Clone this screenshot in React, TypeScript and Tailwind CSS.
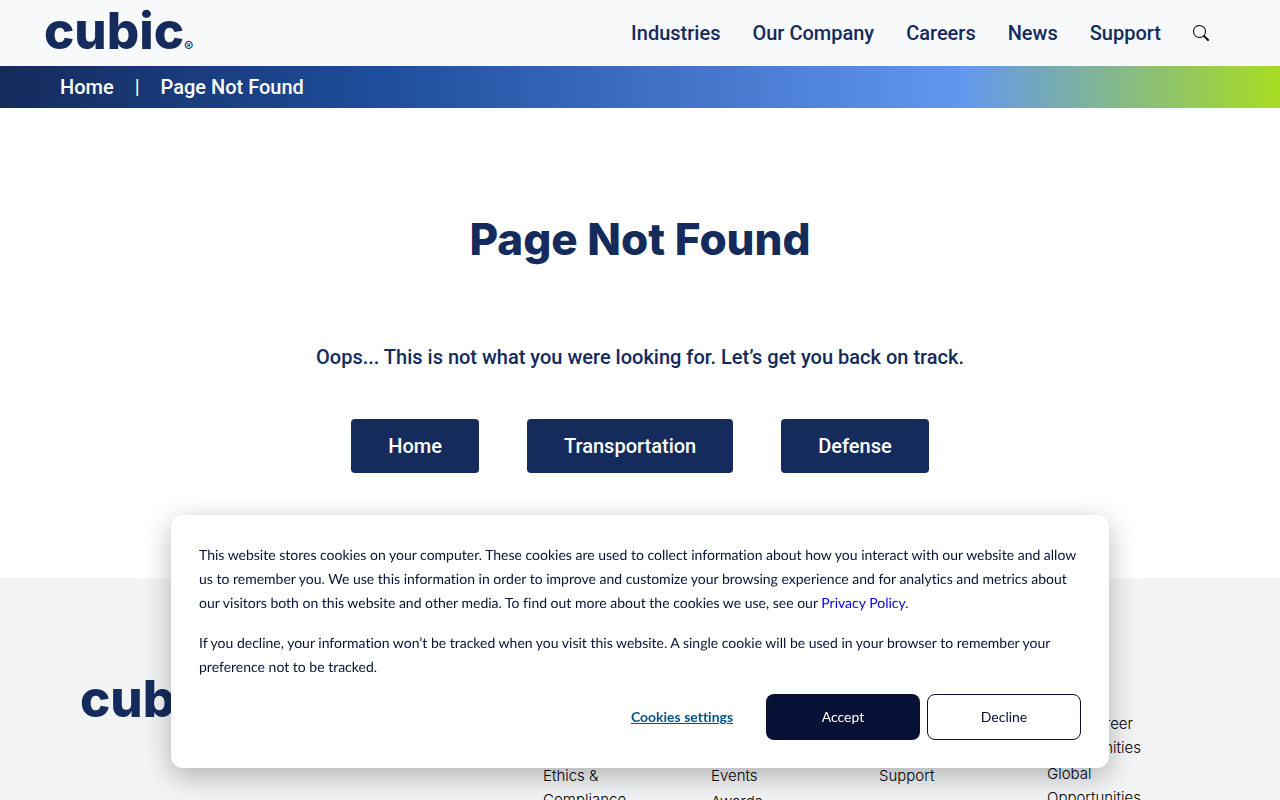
import { FC } from "react";
import { BsSearch } from "react-icons/bs";

const navLinks = ["Industries", "Our Company", "Careers", "News", "Support"];

const buttons = ["Home", "Transportation", "Defense"];

const Logo: FC = () => (
  <a
    href="#"
    className="flex items-end font-['Inter',sans-serif] text-[#142b5c]"
  >
    <span className="text-[51px] leading-[52px] font-extrabold">cubic</span>
    <span className="text-sm leading-5 font-medium">®</span>
  </a>
);

type columnProps = {
  links: string[];
  className?: string;
};

const FooterColumn: FC<columnProps> = ({ links, className = "" }) => (
  <ul className={"flex flex-col gap-[2px] " + className}>
    {links.map((link) => (
      <li key={link}>
        <a href="#">{link}</a>
      </li>
    ))}
  </ul>
);

const CookieBanner: FC = () => (
  <div
    role="dialog"
    aria-label="Cookies"
    className="fixed inset-x-4 bottom-8 mx-auto max-w-[938px] rounded-xl bg-white p-7 font-['Lato',sans-serif] text-sm leading-6 text-[#071135] shadow-[0_8px_28px_rgba(0,0,0,0.28)] [font-variant-ligatures:none] [text-rendering:geometricPrecision]"
  >
    <p>
      This website stores cookies on your computer. These cookies are used to
      collect information about how you interact with our website and allow us
      to remember you. We use this information in order to improve and customize
      your browsing experience and for analytics and metrics about our visitors
      both on this website and other media. To find out more about the cookies
      we use, see our{" "}
      <a href="#" className="text-[#0000ee]">
        Privacy Policy
      </a>
      .
    </p>
    <p className="mt-4">
      If you decline, your information won’t be tracked when you visit this
      website. A single cookie will be used in your browser to remember your
      preference not to be tracked.
    </p>
    <div className="mt-[15px] flex flex-wrap justify-end gap-[7px]">
      <button className="h-[46px] w-[154px] font-bold text-[#00548b] underline">
        Cookies settings
      </button>
      <button className="h-[46px] w-[154px] rounded-lg bg-[#071135] text-white">
        Accept
      </button>
      <button className="h-[46px] w-[154px] rounded-lg border border-[#071135]">
        Decline
      </button>
    </div>
  </div>
);

const App: FC = () => {
  return (
    <div className="bg-white font-['Roboto',sans-serif] text-[#142b5c]">
      <header className="flex h-[66px] items-start justify-between bg-[#f7f9fb] pt-[5px] pr-[71px] pl-11">
        <Logo />
        <nav className="flex h-14 items-center gap-8 text-xl font-medium">
          {navLinks.map((link) => (
            <a key={link} href="#">
              {link}
            </a>
          ))}
          <button aria-label="Search" className="text-black">
            <BsSearch size={16} />
          </button>
        </nav>
      </header>

      <nav
        aria-label="Breadcrumb"
        className="flex h-[42px] items-center gap-[21px] bg-[linear-gradient(90deg,#142b5c_0%,#1e4e9c_30%,#6297f0_75%,#a8dc22_100%)] px-[60px] text-xl font-medium text-white"
      >
        <a href="#">Home</a>
        <span className="font-normal">|</span>
        <span>Page Not Found</span>
      </nav>

      <main className="flex flex-col items-center px-4 pt-[103px] pb-[105px]">
        <h1 className="font-['Inter',sans-serif] text-[44px] leading-[56px] font-extrabold">
          Page Not Found
        </h1>
        <p className="mt-[76px] text-center text-xl font-medium">
          Oops... This is not what you were looking for. Let’s get you back on
          track.
        </p>
        <div className="mt-12 flex flex-wrap justify-center gap-12">
          {buttons.map((label) => (
            <a
              key={label}
              href="#"
              className="flex h-[54px] items-center rounded bg-[#142b5c] px-[37px] text-xl font-medium text-white"
            >
              {label}
            </a>
          ))}
        </div>
      </main>

      <footer className="flex items-start justify-between bg-[#f3f4f6] pt-[95px] pr-[129px] pb-12 pl-20">
        <Logo />
        <div className="grid grid-cols-[repeat(4,104px)] gap-x-16 pt-[39px] font-['Inter',sans-serif] text-[15px] leading-6 font-light text-black">
          <FooterColumn
            className="pt-[52px]"
            links={["Ethics & Compliance"]}
          />
          <FooterColumn className="pt-[52px]" links={["Events", "Awards"]} />
          <FooterColumn className="pt-[52px]" links={["Support"]} />
          <FooterColumn
            links={["Early Career Opportunities", "Global Opportunities"]}
          />
        </div>
      </footer>

      <CookieBanner />
    </div>
  );
};

export default App;
